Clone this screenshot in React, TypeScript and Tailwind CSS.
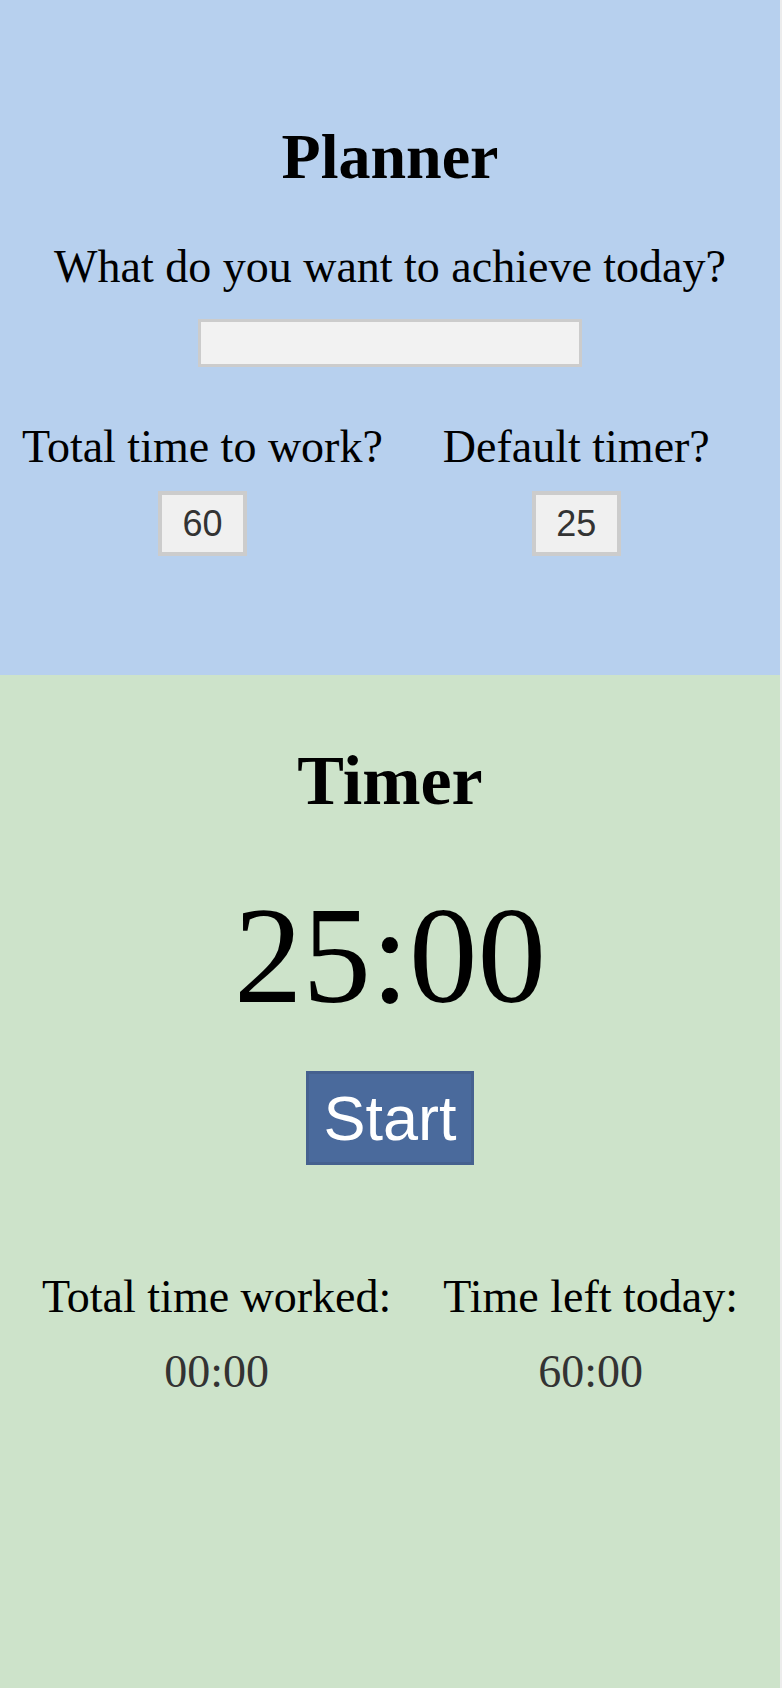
import React, { useState } from 'react';

const serif = "font-['Liberation_Serif','Times_New_Roman',serif]";
const sans = "font-['Liberation_Sans',Arial,sans-serif]";

const App: React.FC = () => {
  const [goal, setGoal] = useState('');
  const [total, setTotal] = useState('60');
  const [timer, setTimer] = useState('25');

  return (
    <div className={`flex min-h-[1688px] w-full bg-[#ececec] ${serif}`}>
      <main className="flex w-[780px] flex-col">
        {/* Planner */}
        <section className="flex h-[675px] flex-col items-center bg-[#b7d0ee] pt-[120px] text-black">
          <h1 className="text-[64px] font-bold leading-[normal]">Planner</h1>
          <p className="mt-[46px] text-[46px] leading-[normal]">What do you want to achieve today?</p>
          <input
            type="text"
            value={goal}
            onChange={(e) => setGoal(e.target.value)}
            className={`mt-[26px] h-[48px] w-[384px] border-[3px] border-[#cccccc] bg-[#f2f2f2] px-2 text-[24px] text-[#333] outline-none ${sans}`}
          />
          <div className="mt-[53px] flex w-full gap-[60px] pl-[22px]">
            <div className="flex flex-col items-center">
              <label className="text-[46px] leading-[normal]">Total time to work?</label>
              <input
                type="text"
                value={total}
                onChange={(e) => setTotal(e.target.value)}
                className={`mt-[18px] h-[65px] w-[89px] border-[4px] border-[#cccccc] bg-[#f0f0f0] text-center text-[36px] text-[#333] outline-none ${sans}`}
              />
            </div>
            <div className="flex flex-col items-center">
              <label className="text-[46px] leading-[normal]">Default timer?</label>
              <input
                type="text"
                value={timer}
                onChange={(e) => setTimer(e.target.value)}
                className={`mt-[18px] h-[65px] w-[89px] border-[4px] border-[#cccccc] bg-[#f0f0f0] text-center text-[36px] text-[#333] outline-none ${sans}`}
              />
            </div>
          </div>
        </section>

        {/* Timer */}
        <section className="flex flex-1 flex-col items-center bg-[#cde3ca] pt-[66px] text-black">
          <h2 className="text-[70px] font-bold leading-[normal]">Timer</h2>
          <div className="mt-[56px] text-[137px] leading-[normal]">25:00</div>
          <button
            className={`mt-[36px] flex h-[94px] w-[168px] items-center justify-center border-[3px] border-[#45618f] bg-[#4a6a9c] text-[63px] leading-[normal] text-white ${sans}`}
          >
            Start
          </button>
          <div className="mt-[105px] flex w-full justify-center gap-[52px]">
            <div className="flex flex-col items-center">
              <span className="text-[46px] leading-[normal]">Total time worked:</span>
              <span className="mt-[22px] text-[46px] leading-[normal] text-[#333]">00:00</span>
            </div>
            <div className="flex flex-col items-center">
              <span className="text-[46px] leading-[normal]">Time left today:</span>
              <span className="mt-[22px] text-[46px] leading-[normal] text-[#333]">60:00</span>
            </div>
          </div>
        </section>
      </main>
    </div>
  );
};

export default App;
